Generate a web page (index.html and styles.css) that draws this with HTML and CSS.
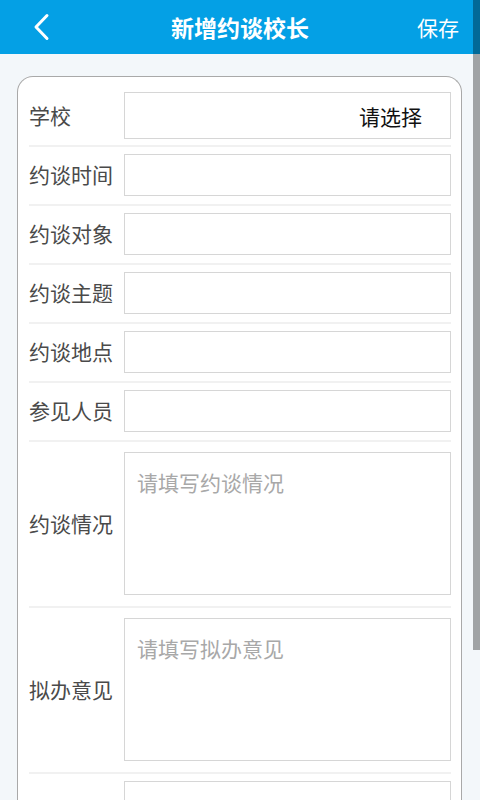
FILE: index.html
```html
<!DOCTYPE html>
<html lang="zh">
<head>
<meta charset="utf-8">
<link rel="stylesheet" href="styles.css">
</head>
<body>
<header class="topbar">
  <svg class="back" width="20" height="30" viewBox="0 0 20 30"><path d="M15 3.5 L4 15 L15 26.5" fill="none" stroke="#fff" stroke-width="3" stroke-linecap="round" stroke-linejoin="round"/></svg>
  <h1 class="title">新增约谈校长</h1>
  <span class="save">保存</span>
</header>
<main class="page">
  <section class="card">
    <div class="row first">
      <label class="lbl">学校</label>
      <div class="field select">请选择</div>
    </div>
    <div class="row"><label class="lbl">约谈时间</label><div class="field"></div></div>
    <div class="row"><label class="lbl">约谈对象</label><div class="field"></div></div>
    <div class="row"><label class="lbl">约谈主题</label><div class="field"></div></div>
    <div class="row"><label class="lbl">约谈地点</label><div class="field"></div></div>
    <div class="row"><label class="lbl">参见人员</label><div class="field"></div></div>
    <div class="row tall"><label class="lbl">约谈情况</label><div class="field area"><span class="ph">请填写约谈情况</span></div></div>
    <div class="row tall"><label class="lbl">拟办意见</label><div class="field area"><span class="ph">请填写拟办意见</span></div></div>
    <div class="row"><label class="lbl"></label><div class="field"></div></div>
  </section>
</main>
<div class="scrollbar"></div>
</body>
</html>
```
FILE: styles.css
```css
* { box-sizing: border-box; }
html, body { margin: 0; padding: 0; }
body {
  width: 480px;
  height: 800px;
  overflow: hidden;
  background: #f3f7fa;
  font-family: "Noto Sans CJK SC", "Noto Sans", sans-serif;
  position: relative;
}
.topbar {
  height: 54px;
  background: #04a0e5;
  display: flex;
  align-items: center;
  position: relative;
  color: #fff;
}
.back { margin-left: 32px; }
.title {
  position: absolute;
  left: 0; right: 0;
  margin: 0;
  text-align: center;
  font-size: 23px;
  font-weight: 700;
  line-height: 54px;
  pointer-events: none;
}
.save {
  margin-left: auto;
  margin-right: 21px;
  font-size: 21px;
}
.page { padding: 22px 18px 0 17px; }
.card {
  background: #fff;
  border: 1px solid #a9a9a9;
  border-bottom: none;
  border-radius: 16px 16px 0 0;
  padding: 15px 10px 0 11px;
  height: 760px;
}
.row {
  display: flex;
  align-items: center;
  padding: 7px 0 8px;
  border-bottom: 2px solid #f1f1f1;
}
.row.first { padding: 0 0 6px; }
.row.tall { padding: 10px 0 11px; }
.lbl {
  width: 95px;
  flex: none;
  font-size: 21px;
  color: #4a4a4a;
  line-height: 1.2;
}
.field {
  flex: 1;
  height: 42px;
  border: 1px solid #d6d6d6;
  background: #fff;
}
.field.select {
  height: 47px;
  display: flex;
  align-items: center;
  justify-content: flex-end;
  padding-right: 28px;
  font-size: 21px;
  color: #111;
}
.field.area {
  height: 143px;
  padding: 17px 12px;
}
.ph {
  font-size: 21px;
  color: #a8a8a8;
  line-height: 1.2;
}
.scrollbar {
  position: absolute;
  right: 0;
  top: 0;
  width: 7px;
  height: 650px;
  background: rgba(0, 0, 0, 0.34);
}
```
